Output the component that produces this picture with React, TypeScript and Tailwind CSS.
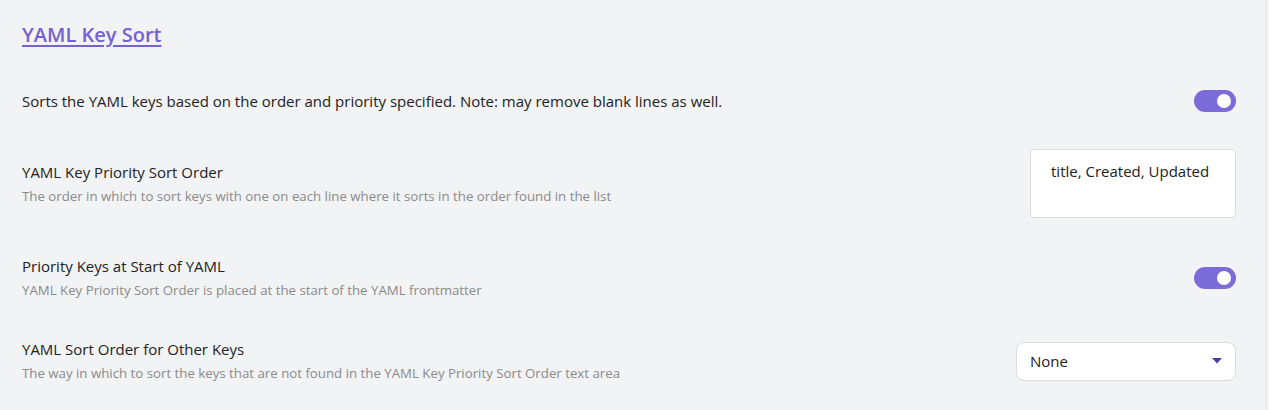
import { useState } from "react";

function Toggle({ on, onChange }: { on: boolean; onChange: () => void }) {
  return (
    <button
      onClick={onChange}
      className={`relative h-[22px] w-[42px] shrink-0 rounded-full transition-colors ${on ? "bg-[#7b6cd9]" : "bg-[#c9c9d1]"}`}
    >
      <span
        className={`absolute top-[4px] h-[14px] w-[14px] rounded-full bg-white transition-all ${on ? "left-[23px]" : "left-[5px]"}`}
      />
    </button>
  );
}

function SettingInfo({ name, desc }: { name: string; desc: string }) {
  return (
    <div className="flex flex-col">
      <div className="text-[15px] leading-[22px] text-[#222222]">{name}</div>
      <div className="mt-[2px] text-[13.25px] leading-[22px] text-[#8a8a8a]">{desc}</div>
    </div>
  );
}

export default function App() {
  const [sortKeys, setSortKeys] = useState(true);
  const [priorityStart, setPriorityStart] = useState(true);
  const [order, setOrder] = useState("title, Created, Updated");
  const [other, setOther] = useState("None");

  return (
    <div
      className="flex h-[410px] w-full bg-[#f2f3f5]"
      style={{ fontFamily: '"Open Sans", "Noto Sans", sans-serif' }}
    >
      <div className="flex-1 pl-[22px] pr-[30px]">
        {/* Heading */}
        <div className="h-[71px] pt-[21px]">
          <a
            href="#"
            className="text-[20px] font-semibold leading-[28px] text-[#7560d4] underline decoration-[1.5px] underline-offset-[3px]"
          >
            YAML Key Sort
          </a>
        </div>

        {/* Sort YAML keys */}
        <div className="flex items-center justify-between py-[19px]">
          <div className="text-[15px] leading-[22px] text-[#222222]">
            Sorts the YAML keys based on the order and priority specified. Note: may remove blank lines as well.
          </div>
          <Toggle on={sortKeys} onChange={() => setSortKeys(!sortKeys)} />
        </div>

        {/* Priority sort order */}
        <div className="flex items-center justify-between py-[18px]">
          <SettingInfo
            name="YAML Key Priority Sort Order"
            desc="The order in which to sort keys with one on each line where it sorts in the order found in the list"
          />
          <textarea
            value={order}
            onChange={(e) => setOrder(e.target.value)}
            className="h-[69px] w-[206px] resize-none rounded-[4px] border border-[#dcdcdc] bg-white px-[20px] py-[10px] text-[15px] leading-[22px] text-[#222222] focus:outline-none"
          />
        </div>

        {/* Priority keys at start */}
        <div className="flex items-center justify-between py-[19px]">
          <SettingInfo
            name="Priority Keys at Start of YAML"
            desc="YAML Key Priority Sort Order is placed at the start of the YAML frontmatter"
          />
          <Toggle on={priorityStart} onChange={() => setPriorityStart(!priorityStart)} />
        </div>

        {/* Other keys */}
        <div className="flex items-center justify-between py-[18px]">
          <SettingInfo
            name="YAML Sort Order for Other Keys"
            desc="The way in which to sort the keys that are not found in the YAML Key Priority Sort Order text area"
          />
          <div className="relative">
            <select
              value={other}
              onChange={(e) => setOther(e.target.value)}
              className="h-[39px] w-[220px] appearance-none rounded-[8px] border border-[#dcdcdc] bg-white pl-[13px] pr-[30px] text-[15px] text-[#222222] focus:outline-none"
            >
              <option>None</option>
              <option>Ascending Alphabetical</option>
              <option>Descending Alphabetical</option>
            </select>
            <svg
              className="pointer-events-none absolute right-[14px] top-[16px]"
              width="10"
              height="6"
              viewBox="0 0 10 6"
            >
              <path d="M0 0h10L5 5.5z" fill="#4b3ba6" />
            </svg>
          </div>
        </div>
      </div>
      <div className="w-[3px] shrink-0 border-l border-[#e3e3e3] bg-[#f7f7f7]" />
    </div>
  );
}
